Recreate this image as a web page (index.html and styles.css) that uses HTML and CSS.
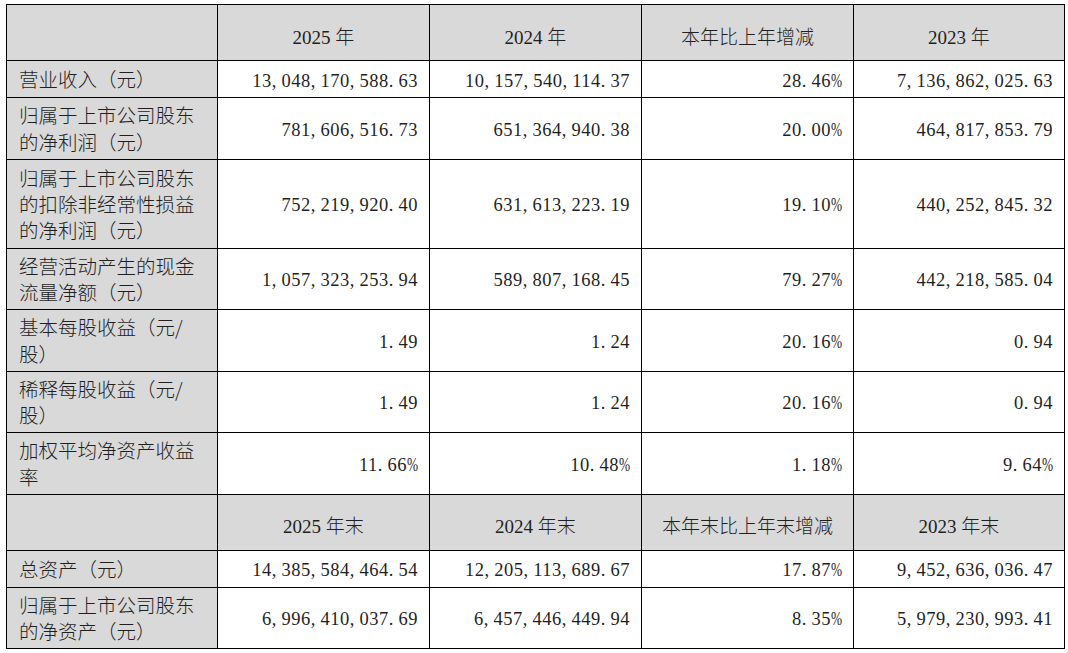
FILE: index.html
```html
<!DOCTYPE html>
<html lang="zh-CN">
<head>
<meta charset="utf-8">
<title>主要会计数据和财务指标</title>
<link rel="stylesheet" href="styles.css">
</head>
<body>
<table class="fin">
  <colgroup>
    <col class="c0"><col class="c1"><col class="c2"><col class="c3"><col class="c4">
  </colgroup>
  <tbody>
    <tr class="hd">
      <th class="lab"></th>
      <th>2025 年</th>
      <th>2024 年</th>
      <th>本年比上年增减</th>
      <th>2023 年</th>
    </tr>
    <tr class="r1">
      <td class="lab">营业收入（元）</td>
      <td class="n">13<span class="p">,</span>048<span class="p">,</span>170<span class="p">,</span>588<span class="p">.</span>63</td>
      <td class="n">10<span class="p">,</span>157<span class="p">,</span>540<span class="p">,</span>114<span class="p">.</span>37</td>
      <td class="n">28<span class="p">.</span>46<span class="pc">%</span></td>
      <td class="n">7<span class="p">,</span>136<span class="p">,</span>862<span class="p">,</span>025<span class="p">.</span>63</td>
    </tr>
    <tr class="r2">
      <td class="lab">归属于上市公司股东的净利润（元）</td>
      <td class="n">781<span class="p">,</span>606<span class="p">,</span>516<span class="p">.</span>73</td>
      <td class="n">651<span class="p">,</span>364<span class="p">,</span>940<span class="p">.</span>38</td>
      <td class="n">20<span class="p">.</span>00<span class="pc">%</span></td>
      <td class="n">464<span class="p">,</span>817<span class="p">,</span>853<span class="p">.</span>79</td>
    </tr>
    <tr class="r3">
      <td class="lab">归属于上市公司股东的扣除非经常性损益的净利润（元）</td>
      <td class="n">752<span class="p">,</span>219<span class="p">,</span>920<span class="p">.</span>40</td>
      <td class="n">631<span class="p">,</span>613<span class="p">,</span>223<span class="p">.</span>19</td>
      <td class="n">19<span class="p">.</span>10<span class="pc">%</span></td>
      <td class="n">440<span class="p">,</span>252<span class="p">,</span>845<span class="p">.</span>32</td>
    </tr>
    <tr class="r2">
      <td class="lab">经营活动产生的现金流量净额（元）</td>
      <td class="n">1<span class="p">,</span>057<span class="p">,</span>323<span class="p">,</span>253<span class="p">.</span>94</td>
      <td class="n">589<span class="p">,</span>807<span class="p">,</span>168<span class="p">.</span>45</td>
      <td class="n">79<span class="p">.</span>27<span class="pc">%</span></td>
      <td class="n">442<span class="p">,</span>218<span class="p">,</span>585<span class="p">.</span>04</td>
    </tr>
    <tr class="r2">
      <td class="lab">基本每股收益（元/<br>股）</td>
      <td class="n">1<span class="p">.</span>49</td>
      <td class="n">1<span class="p">.</span>24</td>
      <td class="n">20<span class="p">.</span>16<span class="pc">%</span></td>
      <td class="n">0<span class="p">.</span>94</td>
    </tr>
    <tr class="r2">
      <td class="lab">稀释每股收益（元/<br>股）</td>
      <td class="n">1<span class="p">.</span>49</td>
      <td class="n">1<span class="p">.</span>24</td>
      <td class="n">20<span class="p">.</span>16<span class="pc">%</span></td>
      <td class="n">0<span class="p">.</span>94</td>
    </tr>
    <tr class="r2">
      <td class="lab">加权平均净资产收益率</td>
      <td class="n">11<span class="p">.</span>66<span class="pc">%</span></td>
      <td class="n">10<span class="p">.</span>48<span class="pc">%</span></td>
      <td class="n">1<span class="p">.</span>18<span class="pc">%</span></td>
      <td class="n">9<span class="p">.</span>64<span class="pc">%</span></td>
    </tr>
    <tr class="hd">
      <th class="lab"></th>
      <th>2025 年末</th>
      <th>2024 年末</th>
      <th>本年末比上年末增减</th>
      <th>2023 年末</th>
    </tr>
    <tr class="r1">
      <td class="lab">总资产（元）</td>
      <td class="n">14<span class="p">,</span>385<span class="p">,</span>584<span class="p">,</span>464<span class="p">.</span>54</td>
      <td class="n">12<span class="p">,</span>205<span class="p">,</span>113<span class="p">,</span>689<span class="p">.</span>67</td>
      <td class="n">17<span class="p">.</span>87<span class="pc">%</span></td>
      <td class="n">9<span class="p">,</span>452<span class="p">,</span>636<span class="p">,</span>036<span class="p">.</span>47</td>
    </tr>
    <tr class="r2">
      <td class="lab">归属于上市公司股东的净资产（元）</td>
      <td class="n">6<span class="p">,</span>996<span class="p">,</span>410<span class="p">,</span>037<span class="p">.</span>69</td>
      <td class="n">6<span class="p">,</span>457<span class="p">,</span>446<span class="p">,</span>449<span class="p">.</span>94</td>
      <td class="n">8<span class="p">.</span>35<span class="pc">%</span></td>
      <td class="n">5<span class="p">,</span>979<span class="p">,</span>230<span class="p">,</span>993<span class="p">.</span>41</td>
    </tr>
  </tbody>
</table>
</body>
</html>
```

FILE: styles.css
```css
html, body {
  margin: 0;
  background: #ffffff;
}
body {
  padding: 4px 0 0 6px;
  color: #1f1f1f;
}
.fin {
  border-collapse: collapse;
  table-layout: fixed;
  width: 1058px;
}
.c0 { width: 211px; }
.c1 { width: 212px; }
.c2 { width: 212px; }
.c3 { width: 212px; }
.c4 { width: 211px; }

.fin th,
.fin td {
  border: 1px solid #000000;
  padding: 0;
  vertical-align: middle;
}
.fin th {
  background: #d9d9d9;
  font-family: "Liberation Serif", "Noto Sans CJK SC", serif;
  font-weight: 300;
  font-size: 19px;
  text-align: center;
  padding-top: 5px;
}
.hd { height: 56px; }
.r1 { height: 37px; }
.r2 { height: 61.5px; }
.r3 { height: 89px; }

.fin td.lab {
  background: #d9d9d9;
  font-family: "Noto Sans CJK SC", sans-serif;
  font-weight: 300;
  font-size: 19.5px;
  line-height: 26.3px;
  text-align: left;
  padding: 3px 10px 2px 12px;
}
.fin td.n {
  text-align: right;
  font-family: "Liberation Serif", serif;
  font-size: 18.5px;
  letter-spacing: 0.5px;
  padding: 4px 11px 0 0;
  white-space: nowrap;
}
.p {
  display: inline-block;
  width: 9.75px;
  letter-spacing: 0;
  text-align: left;
}
.pc {
  display: inline-block;
  width: 11px;
  letter-spacing: 0;
  transform: scaleX(0.72);
  transform-origin: left center;
}
```
